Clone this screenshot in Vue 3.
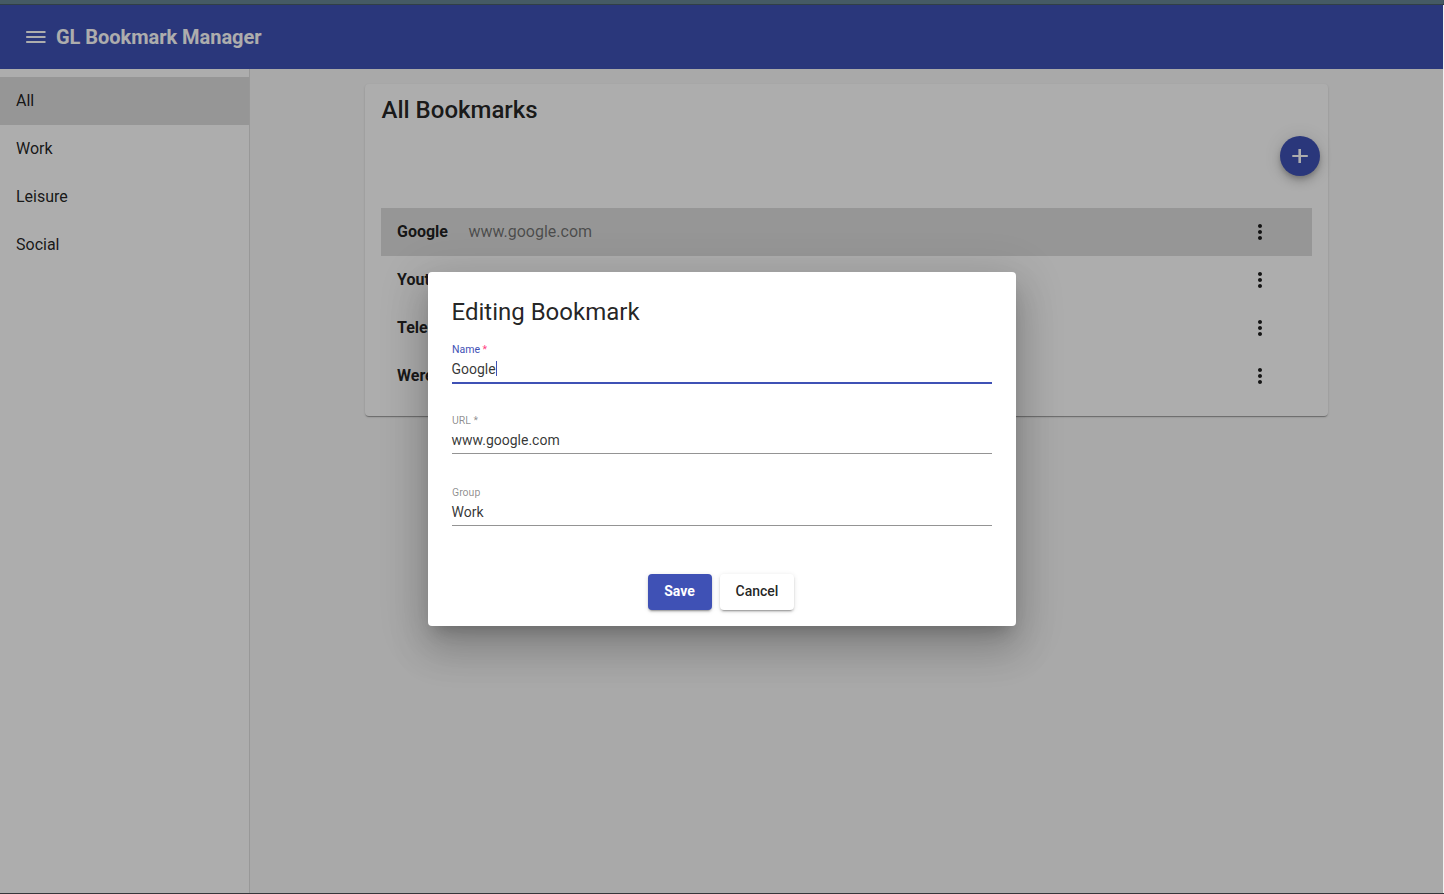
<script setup>
import { ref } from 'vue'

const groups = ['All', 'Work', 'Leisure', 'Social']
const activeGroup = ref('All')
const bookmarks = [
  { name: 'Google', url: 'www.google.com' },
  { name: 'Youtube', url: 'www.youtube.com' },
  { name: 'Telegram', url: 'www.telegram.org' },
  { name: 'Weread', url: 'www.weread.com' },
]
const selected = ref('Google')
const fields = [
  { label: 'Name', required: true, value: 'Google', focused: true },
  { label: 'URL', required: true, value: 'www.google.com' },
  { label: 'Group', value: 'Work' },
]
</script>

<template>
  <div class="window">
    <div class="frame-top"></div>
    <div class="page">
      <header class="toolbar">
        <svg class="icon menu" viewBox="0 0 24 24"><path d="M2.2 18h19.3v-2H2.2v2zm0-5h19.3v-2H2.2v2zm0-7v2h19.3V6H2.2z" /></svg>
        <h1>GL Bookmark Manager</h1>
      </header>
      <div class="body">
        <nav class="sidenav">
          <a v-for="g in groups" :key="g" class="nav-item" :class="{ active: g === activeGroup }">{{ g }}</a>
        </nav>
        <main class="content">
          <section class="card">
            <h2>All Bookmarks</h2>
            <div class="actions">
              <button class="fab">
                <svg class="icon" viewBox="0 0 24 24"><path d="M19.8 13H13v6h-2.6v-6H4.3v-2h6.1V5H13v6h6.8v2z" /></svg>
              </button>
            </div>
            <div v-for="b in bookmarks" :key="b.name" class="row" :class="{ selected: b.name === selected }">
              <span class="name">{{ b.name }}</span>
              <span class="url">{{ b.url }}</span>
              <svg class="icon more" viewBox="0 0 24 24"><path d="M12 8c1.1 0 2-.9 2-2s-.9-2-2-2-2 .9-2 2 .9 2 2 2zm0 2c-1.1 0-2 .9-2 2s.9 2 2 2 2-.9 2-2-.9-2-2-2zm0 6c-1.1 0-2 .9-2 2s.9 2 2 2 2-.9 2-2-.9-2-2-2z" /></svg>
            </div>
          </section>
        </main>
      </div>
      <div class="backdrop">
        <form class="dialog" @submit.prevent>
          <h3>Editing Bookmark</h3>
          <div v-for="f in fields" :key="f.label" class="field" :class="{ focused: f.focused }">
            <label>{{ f.label }}<span v-if="f.required" class="star"> *</span></label>
            <div class="value">{{ f.value }}<i v-if="f.focused" class="caret"></i></div>
          </div>
          <div class="buttons">
            <button class="btn save">Save</button>
            <button class="btn cancel">Cancel</button>
          </div>
        </form>
      </div>
    </div>
  </div>
</template>

<style>
body { margin: 0; overflow: hidden; }
</style>

<style scoped>
* { box-sizing: border-box; }
h1, h2, h3 { margin: 0; }
button { border: 0; padding: 0; font-family: inherit; }
.window {
  width: 1444px;
  height: 894px;
  display: flex;
  flex-direction: column;
  border-bottom: 1px solid #35363a;
  background: #f1f1f1;
  font-family: Roboto, "Liberation Sans", sans-serif;
  color: rgba(0, 0, 0, 0.87);
}
.frame-top { height: 5px; flex: none; background: #455a64; border-bottom: 1px solid #313f46; }
.page {
  position: relative;
  width: 1443px;
  flex: 1;
  display: flex;
  flex-direction: column;
  background: #fafafa;
  overflow: hidden;
}
.icon { width: 24px; height: 24px; fill: currentColor; flex: none; display: block; }
.toolbar {
  height: 64px;
  flex: none;
  display: flex;
  align-items: center;
  padding-left: 24px;
  background: #3f51b5;
  color: #fff;
}
.toolbar h1 { margin-left: 8px; font-size: 20px; line-height: 32px; font-weight: 700; letter-spacing: -0.03px; }
.body { flex: 1; display: flex; }
.sidenav { width: 250px; padding-top: 8px; background: #fff; border-right: 1px solid #e0e0e0; }
.nav-item { display: flex; align-items: center; height: 48px; padding: 0 0 2px 16px; font-size: 16px; }
.nav-item.active { background: #dedede; }
.content { flex: 1; padding: 15px 115px 0; }
.card {
  height: 332px;
  padding: 10px 16px 16px;
  border-radius: 4px;
  background: #fff;
  box-shadow: 0 2px 1px -1px rgba(0, 0, 0, 0.2), 0 1px 1px 0 rgba(0, 0, 0, 0.14), 0 1px 3px 0 rgba(0, 0, 0, 0.12);
}
.card h2 { padding-left: 0.5px; font-size: 24px; line-height: 32px; font-weight: 500; }
.actions { display: flex; justify-content: flex-end; height: 82px; padding-top: 10px; margin-right: -8px; }
.fab {
  width: 40px;
  height: 40px;
  border-radius: 50%;
  display: grid;
  place-items: center;
  background: #3f51b5;
  color: #fff;
  box-shadow: 0 3px 5px -1px rgba(0, 0, 0, 0.2), 0 6px 10px 0 rgba(0, 0, 0, 0.14), 0 1px 18px 0 rgba(0, 0, 0, 0.12);
}
.row { display: flex; align-items: center; height: 48px; padding: 0 40px 0 16px; font-size: 16px; }
.row.selected { background: #dedede; }
.name, .url { padding-bottom: 2px; }
.name { font-weight: 700; }
.url { margin-left: 20.4px; color: rgba(0, 0, 0, 0.5); }
.more { margin-left: auto; }
.backdrop {
  position: absolute;
  inset: 0;
  display: flex;
  align-items: center;
  justify-content: center;
  background: rgba(0, 0, 0, 0.32);
}
.dialog {
  width: 588px;
  height: 354px;
  padding: 24px 24px 16px;
  border-radius: 4px;
  background: #fff;
  box-shadow: 0 11px 15px -7px rgba(0, 0, 0, 0.2), 0 24px 38px 3px rgba(0, 0, 0, 0.14), 0 9px 46px 8px rgba(0, 0, 0, 0.12);
}
.dialog h3 { height: 48px; font-size: 24px; line-height: 32px; font-weight: 400; }
.field { height: 72px; font-size: 14px; line-height: 16px; color: rgba(0, 0, 0, 0.8); }
.field label { display: block; padding-left: 0.5px; font-size: 10.5px; line-height: 12px; color: rgba(0, 0, 0, 0.46); white-space: pre; }
.value { height: 27px; padding-top: 5px; border-bottom: 1px solid rgba(0, 0, 0, 0.42); display: flex; }
.field.focused { height: 71px; }
.field.focused label { color: #3f51b5; }
.field.focused .star { color: #ff4081; }
.field.focused .value { height: 28px; border-bottom: 2px solid #3f51b5; }
.caret { width: 1px; height: 15px; background: #3f51b5; }
.buttons { display: flex; justify-content: center; gap: 8px; margin-top: 15px; padding-right: 2px; }
.btn {
  height: 36px;
  padding: 0 16px 2px;
  border-radius: 4px;
  font-size: 14px;
  line-height: 34px;
  font-weight: 500;
  box-shadow: 0 3px 1px -2px rgba(0, 0, 0, 0.2), 0 2px 2px 0 rgba(0, 0, 0, 0.14), 0 1px 5px 0 rgba(0, 0, 0, 0.12);
}
.save { width: 64px; background: #3f51b5; color: #fff; font-weight: 700; }
.cancel { width: 74px; background: #fff; color: rgba(0, 0, 0, 0.87); }
</style>
